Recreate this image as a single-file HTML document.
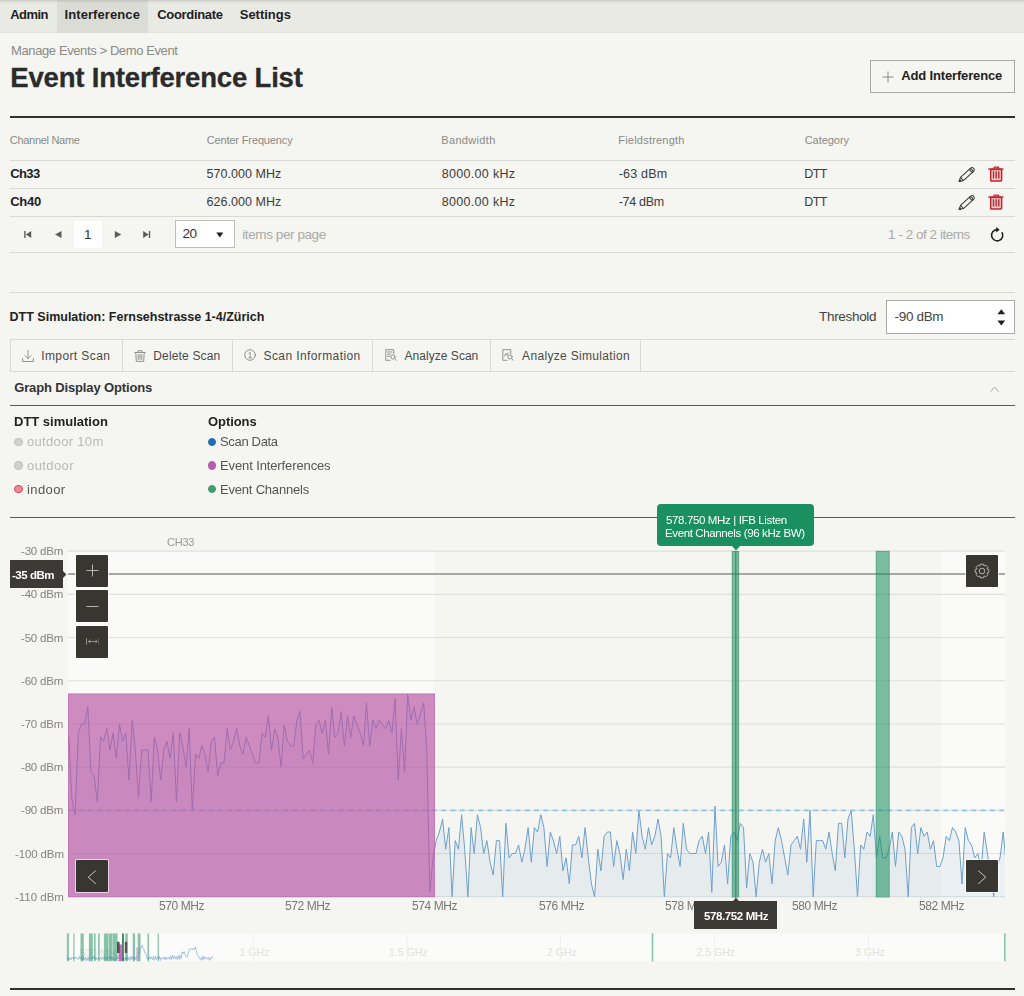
<!DOCTYPE html>
<html lang="en"><head><meta charset="utf-8"><title>Event Interference List</title>
<style>
*{box-sizing:border-box;margin:0;padding:0}
html,body{width:1024px;height:996px;overflow:hidden}
html{background:#f5f5f1}
body{position:relative;font-family:"Liberation Sans", sans-serif}
.abs{position:absolute}
.t{position:absolute;white-space:nowrap;line-height:0;font-family:"Liberation Sans", sans-serif}
.hl{position:absolute;height:1px;left:10px;width:1005px;background:#d9d9d5}
.btn{position:absolute;background:#383631;width:32.4px;height:32.4px;box-shadow:0 0 0 1px rgba(255,255,255,.62);border-radius:1px}
</style></head>
<body>
<div class="abs" style="left:0;top:0;width:1024px;height:32.6px;background:linear-gradient(#c9c9c4 0,#e2e2dd 2px,#eaeae5 4px,#eaeae5 30.6px,#e6e6e1 31.2px,#e6e6e1 100%)"></div>
<div class="abs" style="left:57px;top:0;width:91px;height:32.6px;background:linear-gradient(#c2c2bd 0,#d6d6d1 2px,#dcdcd6 4px,#dcdcd6 100%)"></div>
<div class="abs" style="left:870px;top:60px;width:145px;height:33px;border:1px solid #a9a9a5"></div>
<svg class="abs" style="left:882px;top:71px" width="12" height="12" viewBox="0 0 12 12"><path d="M6 0.5V11.5M0.5 6H11.5" stroke="#8a8a86" stroke-width="1" fill="none"/></svg>
<div class="abs" style="left:10px;top:115.6px;width:1005px;height:2.1px;background:#33322e"></div>
<div class="abs" style="left:10px;top:988px;width:1005px;height:2.3px;background:#33322e"></div>
<div class="hl" style="top:160px"></div>
<div class="hl" style="top:188px"></div>
<div class="hl" style="top:216px"></div>
<div class="hl" style="top:252px"></div>
<div class="hl" style="top:292px"></div>
<div class="hl" style="top:339px"></div>
<div class="hl" style="top:371px"></div>
<div class="hl" style="top:405px;background:#5a5a56"></div>
<div class="hl" style="top:517px;background:#5a5a56"></div>
<svg class="abs" style="left:955px;top:165.5px" width="22" height="19" viewBox="0 0 22 19"><g transform="translate(4.0,15.6) rotate(-42)" fill="none" stroke="#3a3a3a" stroke-width="1.05" stroke-linejoin="round"><path d="M0.2 0L4 -2.15H17.6A2.15 2.15 0 0 1 17.6 2.15H4Z"/><path d="M4 -2.15V2.15"/><ellipse cx="16.6" cy="0" rx="1" ry="2.15"/><path d="M0.2 0L1.8 -0.9V0.9Z" fill="#3a3a3a"/></g></svg>
<svg class="abs" style="left:988px;top:165.8px" width="16" height="16" viewBox="0 0 16 16"><g fill="none" stroke="#c0272d"><path d="M0.4 3h15" stroke-width="1.5"/><path d="M5.7 2.6L6.5 1.1H10.3L11.1 2.6" stroke-width="1.3" stroke-linejoin="round"/><rect x="2.7" y="3.4" width="10.9" height="11.7" rx="0.8" stroke-width="1.5" fill="rgba(192,39,45,0.18)"/><path d="M5.5 5.2v7.4M8.15 5.2v7.4M10.8 5.2v7.4" stroke-width="1.4"/></g></svg>
<svg class="abs" style="left:955px;top:193.5px" width="22" height="19" viewBox="0 0 22 19"><g transform="translate(4.0,15.6) rotate(-42)" fill="none" stroke="#3a3a3a" stroke-width="1.05" stroke-linejoin="round"><path d="M0.2 0L4 -2.15H17.6A2.15 2.15 0 0 1 17.6 2.15H4Z"/><path d="M4 -2.15V2.15"/><ellipse cx="16.6" cy="0" rx="1" ry="2.15"/><path d="M0.2 0L1.8 -0.9V0.9Z" fill="#3a3a3a"/></g></svg>
<svg class="abs" style="left:988px;top:193.8px" width="16" height="16" viewBox="0 0 16 16"><g fill="none" stroke="#c0272d"><path d="M0.4 3h15" stroke-width="1.5"/><path d="M5.7 2.6L6.5 1.1H10.3L11.1 2.6" stroke-width="1.3" stroke-linejoin="round"/><rect x="2.7" y="3.4" width="10.9" height="11.7" rx="0.8" stroke-width="1.5" fill="rgba(192,39,45,0.18)"/><path d="M5.5 5.2v7.4M8.15 5.2v7.4M10.8 5.2v7.4" stroke-width="1.4"/></g></svg>
<svg class="abs" style="left:989px;top:227px" width="16" height="16" viewBox="0 0 16 16"><path d="M12.9 5.2A5.6 5.6 0 1 1 8 2.6" fill="none" stroke="#222" stroke-width="1.6"/><path d="M7.2 0l3.4 2.7L7.2 5.4z" fill="#222"/></svg>
<div class="abs" style="left:74px;top:221px;width:28px;height:27px;background:#fff"></div>
<div class="abs" style="left:175px;top:220px;width:60px;height:28px;background:#fff;border:1px solid #bebeba"></div>
<svg class="abs" style="left:20px;top:229px" width="140" height="11" viewBox="0 0 140 11"><g fill="#5c5c58"><rect x="4.2" y="2" width="1.4" height="7"/><path d="M11.2 2v7L5.8 5.5z"/><path d="M41.5 2v7L35 5.5z"/><path d="M94.8 2v7l6.5-3.5z"/><path d="M123.2 2v7l5.4-3.5z"/><rect x="128.8" y="2" width="1.4" height="7"/></g></svg>
<svg class="abs" style="left:216px;top:232px" width="8" height="6" viewBox="0 0 8 6"><path d="M0.3 0.5h7L3.8 5.6z" fill="#222"/></svg>
<div class="abs" style="left:886px;top:300.4px;width:128.6px;height:33.4px;background:#fff;border:1px solid #a9a9a5"></div>
<svg class="abs" style="left:996.5px;top:309.4px" width="9" height="18" viewBox="0 0 9 18"><path d="M0.4 5.2h7.8L4.3 0.3zM0.4 11.6h7.8L4.3 16.6z" fill="#222"/></svg>
<div class="abs" style="left:10px;top:339px;width:1px;height:33px;background:#d9d9d5"></div>
<div class="abs" style="left:122px;top:339px;width:1px;height:33px;background:#d9d9d5"></div>
<div class="abs" style="left:232px;top:339px;width:1px;height:33px;background:#d9d9d5"></div>
<div class="abs" style="left:372px;top:339px;width:1px;height:33px;background:#d9d9d5"></div>
<div class="abs" style="left:490px;top:339px;width:1px;height:33px;background:#d9d9d5"></div>
<div class="abs" style="left:640px;top:339px;width:1px;height:33px;background:#d9d9d5"></div>
<svg class="abs" style="left:22px;top:349.6px" width="12" height="12" viewBox="0 0 12 12"><path d="M6 0.5v8M2.8 5.5L6 8.6l3.2-3.1M0.6 8.5v3h10.8v-3" stroke="#8c8c88" stroke-width="0.95" fill="none" stroke-linejoin="round" stroke-linecap="round"/></svg>
<svg class="abs" style="left:134.2px;top:349.6px" width="12" height="12" viewBox="0 0 12 12"><path d="M0.8 2.5h10.4M4 2.3V0.8h4v1.5M1.8 2.8l0.5 8.6h7.4l0.5-8.6M4.2 4.5v5M6 4.5v5M7.8 4.5v5" stroke="#8c8c88" stroke-width="0.95" fill="none" stroke-linejoin="round" stroke-linecap="round"/></svg>
<svg class="abs" style="left:244.2px;top:349.4px" width="12" height="12" viewBox="0 0 12 12"><circle cx="6" cy="6" r="5.3" stroke="#8c8c88" stroke-width="0.95" fill="none" stroke-linejoin="round" stroke-linecap="round"/><path d="M5 4.2L6.2 3.4v5.4M5 8.8h2.4" stroke="#8c8c88" stroke-width="0.95" fill="none" stroke-linejoin="round" stroke-linecap="round"/></svg>
<svg class="abs" style="left:384.6px;top:349.4px" width="12" height="12" viewBox="0 0 12 12"><path d="M5 11.3H0.8V0.7h8v4M2.6 3h4.4M2.6 5.2h3M2.6 7.4h2" stroke="#8c8c88" stroke-width="0.95" fill="none" stroke-linejoin="round" stroke-linecap="round"/><circle cx="8" cy="8" r="2.1" stroke="#8c8c88" stroke-width="0.95" fill="none" stroke-linejoin="round" stroke-linecap="round"/><path d="M9.6 9.6l1.8 1.8" stroke="#8c8c88" stroke-width="0.95" fill="none" stroke-linejoin="round" stroke-linecap="round"/></svg>
<svg class="abs" style="left:501.6px;top:349.4px" width="12" height="12" viewBox="0 0 12 12"><path d="M5 11.3H0.8V0.7h8v4M2.4 7.2l1.4-2.6 1.2 1.6 1.2-2.4" stroke="#8c8c88" stroke-width="0.95" fill="none" stroke-linejoin="round" stroke-linecap="round"/><circle cx="8" cy="8" r="2.1" stroke="#8c8c88" stroke-width="0.95" fill="none" stroke-linejoin="round" stroke-linecap="round"/><path d="M9.6 9.6l1.8 1.8" stroke="#8c8c88" stroke-width="0.95" fill="none" stroke-linejoin="round" stroke-linecap="round"/></svg>
<svg class="abs" style="left:989.5px;top:386px" width="10" height="7" viewBox="0 0 10 7"><path d="M0.6 5.6L4.6 1 8.6 5.6" stroke="#a2a29e" stroke-width="1" fill="none"/></svg>
<div class="abs" style="left:14.2px;top:437.6px;width:8.4px;height:8.4px;border-radius:50%;background:#d0d0cc;border:1px solid #bdbdb9"></div>
<div class="abs" style="left:14.2px;top:461.2px;width:8.4px;height:8.4px;border-radius:50%;background:#d0d0cc;border:1px solid #bdbdb9"></div>
<div class="abs" style="left:14.2px;top:485.1px;width:8.4px;height:8.4px;border-radius:50%;background:#ef8a94;border:1px solid #dc4a5e"></div>
<div class="abs" style="left:208px;top:437.6px;width:8.4px;height:8.4px;border-radius:50%;background:#1f6eb5;border:1px solid #1f6eb5"></div>
<div class="abs" style="left:208px;top:461.2px;width:8.4px;height:8.4px;border-radius:50%;background:#b95cb0;border:1px solid #b95cb0"></div>
<div class="abs" style="left:208px;top:485.1px;width:8.4px;height:8.4px;border-radius:50%;background:#3f9e72;border:1px solid #3f9e72"></div>
<svg class="abs" style="left:0;top:0" width="1024" height="996" viewBox="0 0 1024 996">
<rect x="68" y="551" width="366.6" height="346" fill="#fafaf8"/>
<rect x="941" y="551" width="64.5" height="346" fill="#fafaf8"/>
<line x1="68" x2="1005" y1="551.15" y2="551.15" stroke="#dfdfdb" stroke-width="1.1"/>
<line x1="68" x2="1005" y1="594.35" y2="594.35" stroke="#dfdfdb" stroke-width="1.1"/>
<line x1="68" x2="1005" y1="637.55" y2="637.55" stroke="#dfdfdb" stroke-width="1.1"/>
<line x1="68" x2="1005" y1="680.75" y2="680.75" stroke="#dfdfdb" stroke-width="1.1"/>
<line x1="68" x2="1005" y1="723.95" y2="723.95" stroke="#dfdfdb" stroke-width="1.1"/>
<line x1="68" x2="1005" y1="767.15" y2="767.15" stroke="#dfdfdb" stroke-width="1.1"/>
<line x1="68" x2="1005" y1="810.35" y2="810.35" stroke="#dfdfdb" stroke-width="1.1"/>
<line x1="68" x2="1005" y1="853.55" y2="853.55" stroke="#dfdfdb" stroke-width="1.1"/>
<line x1="68" x2="1005" y1="896.75" y2="896.75" stroke="#dfdfdb" stroke-width="1.1"/>
<clipPath id="cp"><rect x="68" y="550" width="937" height="347"/></clipPath><g clip-path="url(#cp)">
<polygon points="68.2,897 68.8,736.9 72.0,799.5 75.1,814.7 78.3,732.6 81.5,724.0 84.6,724.0 87.8,706.7 91.0,771.5 94.1,775.8 97.3,801.7 100.5,736.9 103.6,741.2 106.8,728.3 110.0,749.9 113.1,732.6 116.3,758.5 119.5,724.0 122.6,741.2 125.8,732.6 129.0,780.1 132.2,719.6 135.3,749.9 138.5,797.4 141.7,749.9 144.8,749.9 148.0,749.9 151.2,801.7 154.3,736.9 157.5,749.9 160.7,780.1 163.8,749.9 167.0,741.2 170.2,758.5 173.3,732.6 176.5,801.7 179.7,732.6 182.8,745.5 186.0,767.1 189.2,728.3 192.3,810.4 195.5,754.2 198.7,758.5 201.8,745.5 205.0,754.2 208.2,771.5 211.3,741.2 214.5,736.9 217.7,775.8 220.8,762.8 224.0,762.8 227.2,728.3 230.3,749.9 233.5,741.2 236.7,728.3 239.8,745.5 243.0,754.2 246.2,736.9 249.3,745.5 252.5,754.2 255.7,762.8 258.9,762.8 262.0,733.0 265.2,737.3 268.4,715.7 271.5,750.3 274.7,728.7 277.9,737.3 281.0,767.1 284.2,724.8 287.4,741.2 290.5,746.0 293.7,746.0 296.9,720.1 300.0,711.4 303.2,758.9 306.4,754.2 309.5,750.3 312.7,763.3 315.9,724.4 319.0,720.1 322.2,733.0 325.4,720.1 328.5,754.2 331.7,707.1 334.9,737.3 338.0,733.0 341.2,711.4 344.4,746.0 347.5,715.7 350.7,737.3 353.9,715.7 357.0,724.4 360.2,733.0 363.4,746.0 366.5,702.8 369.7,746.0 372.9,720.1 376.0,728.7 379.2,720.1 382.4,724.4 385.6,728.7 388.7,720.1 391.9,733.0 395.1,698.5 398.2,780.1 401.4,728.7 404.6,771.5 407.7,694.1 410.9,720.1 414.1,707.1 417.2,724.4 420.4,713.6 423.6,702.8 426.7,746.8 429.9,892.0 433.1,857.0 436.2,840.6 439.4,832.0 442.6,819.0 445.7,849.2 448.9,827.6 452.1,896.8 455.2,840.6 458.4,849.2 461.6,814.7 464.7,849.2 467.9,896.8 471.1,827.6 474.2,853.5 477.4,814.7 480.6,827.6 483.7,853.5 486.9,840.6 490.1,862.2 493.2,875.1 496.4,840.6 499.6,840.6 502.7,896.8 505.9,823.3 509.1,857.9 512.2,853.5 515.4,853.5 518.6,844.9 521.8,862.2 524.9,849.2 528.1,827.6 531.3,862.2 534.4,827.6 537.6,832.0 540.8,814.7 543.9,827.6 547.1,866.5 550.3,832.0 553.4,840.6 556.6,853.5 559.8,836.3 562.9,870.8 566.1,857.9 569.3,883.8 572.4,844.9 575.6,844.9 578.8,836.3 581.9,857.9 585.1,827.6 588.3,857.9 591.4,883.8 594.6,896.8 597.8,849.2 600.9,870.8 604.1,836.3 607.3,832.0 610.4,832.0 613.6,866.5 616.8,840.6 619.9,853.5 623.1,879.5 626.3,849.2 629.4,870.8 632.6,832.0 635.8,853.5 638.9,810.4 642.1,836.3 645.3,849.2 648.5,827.6 651.6,844.9 654.8,836.3 658.0,819.0 661.1,836.3 664.3,896.8 667.5,853.5 670.6,857.9 673.8,827.6 677.0,849.2 680.1,866.5 683.3,823.3 686.5,849.2 689.6,853.5 692.8,853.5 696.0,853.5 699.1,840.6 702.3,836.3 705.5,853.5 708.6,832.0 711.8,892.4 715.0,806.0 718.1,866.5 721.3,862.2 724.5,844.9 727.6,883.8 730.8,836.3 734.0,832.0 737.1,840.6 740.3,823.3 743.5,827.6 746.6,888.1 749.8,853.5 753.0,862.2 756.1,896.8 759.3,862.2 762.5,849.2 765.6,862.2 768.8,853.5 772.0,883.8 775.2,840.6 778.3,827.6 781.5,840.6 784.7,857.9 787.8,875.1 791.0,844.9 794.2,840.6 797.3,836.3 800.5,849.2 803.7,819.0 806.8,862.2 810.0,810.4 813.2,896.8 816.3,840.6 819.5,840.6 822.7,840.6 825.8,849.2 829.0,832.0 832.2,853.5 835.3,870.8 838.5,823.3 841.7,823.3 844.8,857.9 848.0,819.0 851.2,810.4 854.3,849.2 857.5,896.8 860.7,844.9 863.8,849.2 867.0,832.0 870.2,836.3 873.3,814.7 876.5,857.9 879.7,836.3 882.8,857.9 886.0,857.9 889.2,849.2 892.3,832.0 895.5,866.5 898.7,832.0 901.9,836.3 905.0,849.2 908.2,896.8 911.4,827.6 914.5,823.3 917.7,853.5 920.9,827.6 924.0,836.3 927.2,832.0 930.4,849.2 933.5,840.6 936.7,866.5 939.9,866.5 943.0,857.9 946.2,836.3 949.4,840.6 952.5,827.6 955.7,832.0 958.9,840.6 962.0,883.8 965.2,827.6 968.4,840.6 971.5,844.9 974.7,857.9 977.9,853.5 981.0,870.8 984.2,832.0 987.4,853.5 990.5,875.1 993.7,896.8 996.9,866.5 1000.0,857.9 1003.2,832.0 1006.4,866.5 1007,897" fill="rgba(110,160,205,0.11)"/>
<polyline points="68.8,736.9 72.0,799.5 75.1,814.7 78.3,732.6 81.5,724.0 84.6,724.0 87.8,706.7 91.0,771.5 94.1,775.8 97.3,801.7 100.5,736.9 103.6,741.2 106.8,728.3 110.0,749.9 113.1,732.6 116.3,758.5 119.5,724.0 122.6,741.2 125.8,732.6 129.0,780.1 132.2,719.6 135.3,749.9 138.5,797.4 141.7,749.9 144.8,749.9 148.0,749.9 151.2,801.7 154.3,736.9 157.5,749.9 160.7,780.1 163.8,749.9 167.0,741.2 170.2,758.5 173.3,732.6 176.5,801.7 179.7,732.6 182.8,745.5 186.0,767.1 189.2,728.3 192.3,810.4 195.5,754.2 198.7,758.5 201.8,745.5 205.0,754.2 208.2,771.5 211.3,741.2 214.5,736.9 217.7,775.8 220.8,762.8 224.0,762.8 227.2,728.3 230.3,749.9 233.5,741.2 236.7,728.3 239.8,745.5 243.0,754.2 246.2,736.9 249.3,745.5 252.5,754.2 255.7,762.8 258.9,762.8 262.0,733.0 265.2,737.3 268.4,715.7 271.5,750.3 274.7,728.7 277.9,737.3 281.0,767.1 284.2,724.8 287.4,741.2 290.5,746.0 293.7,746.0 296.9,720.1 300.0,711.4 303.2,758.9 306.4,754.2 309.5,750.3 312.7,763.3 315.9,724.4 319.0,720.1 322.2,733.0 325.4,720.1 328.5,754.2 331.7,707.1 334.9,737.3 338.0,733.0 341.2,711.4 344.4,746.0 347.5,715.7 350.7,737.3 353.9,715.7 357.0,724.4 360.2,733.0 363.4,746.0 366.5,702.8 369.7,746.0 372.9,720.1 376.0,728.7 379.2,720.1 382.4,724.4 385.6,728.7 388.7,720.1 391.9,733.0 395.1,698.5 398.2,780.1 401.4,728.7 404.6,771.5 407.7,694.1 410.9,720.1 414.1,707.1 417.2,724.4 420.4,713.6 423.6,702.8 426.7,746.8 429.9,892.0 433.1,857.0 436.2,840.6 439.4,832.0 442.6,819.0 445.7,849.2 448.9,827.6 452.1,896.8 455.2,840.6 458.4,849.2 461.6,814.7 464.7,849.2 467.9,896.8 471.1,827.6 474.2,853.5 477.4,814.7 480.6,827.6 483.7,853.5 486.9,840.6 490.1,862.2 493.2,875.1 496.4,840.6 499.6,840.6 502.7,896.8 505.9,823.3 509.1,857.9 512.2,853.5 515.4,853.5 518.6,844.9 521.8,862.2 524.9,849.2 528.1,827.6 531.3,862.2 534.4,827.6 537.6,832.0 540.8,814.7 543.9,827.6 547.1,866.5 550.3,832.0 553.4,840.6 556.6,853.5 559.8,836.3 562.9,870.8 566.1,857.9 569.3,883.8 572.4,844.9 575.6,844.9 578.8,836.3 581.9,857.9 585.1,827.6 588.3,857.9 591.4,883.8 594.6,896.8 597.8,849.2 600.9,870.8 604.1,836.3 607.3,832.0 610.4,832.0 613.6,866.5 616.8,840.6 619.9,853.5 623.1,879.5 626.3,849.2 629.4,870.8 632.6,832.0 635.8,853.5 638.9,810.4 642.1,836.3 645.3,849.2 648.5,827.6 651.6,844.9 654.8,836.3 658.0,819.0 661.1,836.3 664.3,896.8 667.5,853.5 670.6,857.9 673.8,827.6 677.0,849.2 680.1,866.5 683.3,823.3 686.5,849.2 689.6,853.5 692.8,853.5 696.0,853.5 699.1,840.6 702.3,836.3 705.5,853.5 708.6,832.0 711.8,892.4 715.0,806.0 718.1,866.5 721.3,862.2 724.5,844.9 727.6,883.8 730.8,836.3 734.0,832.0 737.1,840.6 740.3,823.3 743.5,827.6 746.6,888.1 749.8,853.5 753.0,862.2 756.1,896.8 759.3,862.2 762.5,849.2 765.6,862.2 768.8,853.5 772.0,883.8 775.2,840.6 778.3,827.6 781.5,840.6 784.7,857.9 787.8,875.1 791.0,844.9 794.2,840.6 797.3,836.3 800.5,849.2 803.7,819.0 806.8,862.2 810.0,810.4 813.2,896.8 816.3,840.6 819.5,840.6 822.7,840.6 825.8,849.2 829.0,832.0 832.2,853.5 835.3,870.8 838.5,823.3 841.7,823.3 844.8,857.9 848.0,819.0 851.2,810.4 854.3,849.2 857.5,896.8 860.7,844.9 863.8,849.2 867.0,832.0 870.2,836.3 873.3,814.7 876.5,857.9 879.7,836.3 882.8,857.9 886.0,857.9 889.2,849.2 892.3,832.0 895.5,866.5 898.7,832.0 901.9,836.3 905.0,849.2 908.2,896.8 911.4,827.6 914.5,823.3 917.7,853.5 920.9,827.6 924.0,836.3 927.2,832.0 930.4,849.2 933.5,840.6 936.7,866.5 939.9,866.5 943.0,857.9 946.2,836.3 949.4,840.6 952.5,827.6 955.7,832.0 958.9,840.6 962.0,883.8 965.2,827.6 968.4,840.6 971.5,844.9 974.7,857.9 977.9,853.5 981.0,870.8 984.2,832.0 987.4,853.5 990.5,875.1 993.7,896.8 996.9,866.5 1000.0,857.9 1003.2,832.0 1006.4,866.5" fill="none" stroke="#6fa0cb" stroke-width="1" stroke-linejoin="round"/>
</g>
<line x1="68" x2="1005.5" y1="810.4" y2="810.4" stroke="#8cc6f0" stroke-width="1.9" stroke-dasharray="4.8 4.5" stroke-dashoffset="8.1"/>
<rect x="68" y="693.5" width="367" height="203.5" fill="rgba(183,82,163,0.66)"/>
<rect x="68.5" y="694" width="366" height="203" fill="none" stroke="rgba(184,84,168,0.32)" stroke-width="1"/>
<line x1="68" x2="1005" y1="574" y2="574" stroke="#a8a8a4" stroke-width="1.9"/>
<rect x="731.8" y="550.9" width="7.3" height="346.1" fill="rgba(26,144,96,0.57)"/><rect x="732.3" y="551.4" width="6.3" height="346" fill="none" stroke="rgba(26,144,96,0.33)" stroke-width="1"/>
<rect x="875.8" y="550.9" width="13.85" height="346.1" fill="rgba(26,144,96,0.57)"/><rect x="876.3" y="551.4" width="12.85" height="346" fill="none" stroke="rgba(26,144,96,0.33)" stroke-width="1"/>
<line x1="735.8" x2="735.8" y1="551" y2="899" stroke="#5a6b60" stroke-width="1.2" opacity="0.8"/>
</svg>
<div class="abs" style="left:67px;top:933.5px;width:939px;height:27.7px;background:#fbfbf9;z-index:-2"></div>
<svg class="abs" style="left:0;top:0" width="1024" height="996" viewBox="0 0 1024 996">
<line x1="253" x2="253" y1="933.5" y2="961.2" stroke="#f0f0ec" stroke-width="1"/>
<line x1="407" x2="407" y1="933.5" y2="961.2" stroke="#f0f0ec" stroke-width="1"/>
<line x1="560.5" x2="560.5" y1="933.5" y2="961.2" stroke="#f0f0ec" stroke-width="1"/>
<line x1="714.5" x2="714.5" y1="933.5" y2="961.2" stroke="#f0f0ec" stroke-width="1"/>
<line x1="868.5" x2="868.5" y1="933.5" y2="961.2" stroke="#f0f0ec" stroke-width="1"/>
<polyline points="67.2,959.3 68.2,957.6 69.1,960.0 70.1,957.8 71.0,959.8 72.0,957.2 72.9,958.8 73.9,956.9 74.8,958.8 75.8,957.0 76.7,958.8 77.7,957.7 78.6,959.5 79.6,956.2 80.5,958.9 81.5,957.5 82.4,960.0 83.4,956.0 84.3,959.9 85.3,957.1 86.2,960.7 87.2,957.8 88.1,960.4 89.1,957.3 90.0,959.0 91.0,957.7 91.9,959.3 92.9,956.3 93.8,959.1 94.8,956.7 95.7,960.0 96.7,957.2 97.6,959.8 98.6,957.8 99.5,958.8 100.5,957.5 101.4,960.1 102.4,957.0 103.3,959.3 104.3,956.7 105.2,959.6 106.2,957.3 107.1,960.3 108.1,956.5 109.0,959.2 110.0,956.8 110.9,959.8 111.9,956.1 112.8,960.2 113.8,957.3 114.7,960.7 115.7,957.7 116.6,959.5 117.6,956.4 118.5,959.0 119.5,956.9 120.4,958.8 121.4,956.6 122.3,960.2 123.3,956.8 124.2,960.5 125.2,957.3 126.1,960.1 127.1,956.7 128.0,959.9 129.0,957.0 129.9,960.4 130.9,956.0 131.8,959.6 132.8,956.6 133.7,958.8 134.7,956.5 135.6,960.0 136.6,955.9 137.5,960.3 138.5,952.7 139.4,952.7 140.4,947.6 141.3,947.6 142.2,944.9 143.2,948.9 144.1,949.9 145.1,953.5 146.0,953.4 147.0,958.4 147.9,957.4 148.9,959.5 149.8,956.2 150.8,958.9 151.7,957.0 152.7,959.8 153.6,956.1 154.6,960.3 155.5,956.2 156.5,959.3 157.4,957.1 158.4,959.4 159.3,956.1 160.3,960.6 161.2,957.6 162.2,959.1 163.1,957.4 164.1,959.2 165.0,956.9 166.0,959.9 166.9,957.4 167.9,958.7 168.8,957.1 169.8,959.4 170.7,955.8 171.7,959.6 172.6,955.5 173.6,958.7 174.5,955.7 175.5,959.1 176.4,956.8 177.4,959.5 178.3,955.3 179.3,959.4 180.2,955.3 181.2,958.5 182.1,952.0 183.1,953.8 184.0,951.5 185.0,953.7 185.9,956.2 186.9,957.5 187.8,956.0 188.8,950.3 189.7,948.7 190.7,949.6 191.6,948.5 192.6,949.8 193.5,948.1 194.5,949.7 195.4,947.1 196.4,950.8 197.3,955.0 198.3,956.6 199.2,957.2 200.2,959.4 201.1,957.7 202.1,960.4 203.0,955.9 204.0,959.6 204.9,956.9 205.9,958.9 206.8,957.7 207.8,959.4 208.7,957.4 209.7,960.4 210.6,957.6 211.6,958.7 212.5,956.0" fill="none" stroke="#8fb3d9" stroke-width="0.75"/>
<rect x="66.90" y="933.5" width="2.00" height="27.7" fill="rgba(26,144,96,0.52)"/>
<rect x="73.30" y="933.5" width="1.20" height="27.7" fill="rgba(26,144,96,0.52)"/>
<rect x="80.50" y="933.5" width="3.25" height="27.7" fill="rgba(26,144,96,0.52)"/>
<rect x="88.90" y="933.5" width="3.90" height="27.7" fill="rgba(26,144,96,0.52)"/>
<rect x="94.00" y="933.5" width="1.60" height="27.7" fill="rgba(26,144,96,0.52)"/>
<rect x="98.10" y="933.5" width="1.60" height="27.7" fill="rgba(26,144,96,0.52)"/>
<rect x="103.90" y="933.5" width="4.30" height="27.7" fill="rgba(26,144,96,0.52)"/>
<rect x="108.60" y="933.5" width="4.00" height="27.7" fill="rgba(26,144,96,0.52)"/>
<rect x="113.00" y="933.5" width="4.50" height="27.7" fill="rgba(26,144,96,0.52)"/>
<rect x="125.30" y="933.5" width="2.50" height="27.7" fill="rgba(26,144,96,0.52)"/>
<rect x="132.70" y="933.5" width="2.30" height="27.7" fill="rgba(26,144,96,0.52)"/>
<rect x="137.70" y="933.5" width="2.80" height="27.7" fill="rgba(26,144,96,0.52)"/>
<rect x="147.50" y="933.5" width="1.50" height="27.7" fill="rgba(26,144,96,0.52)"/>
<rect x="157.70" y="933.5" width="1.20" height="27.7" fill="rgba(26,144,96,0.52)"/>
<rect x="651.70" y="933.5" width="1.60" height="27.7" fill="rgba(26,144,96,0.52)"/>
<rect x="1004.00" y="933.5" width="1.60" height="27.7" fill="rgba(26,144,96,0.52)"/>
<rect x="122.2" y="933.5" width="1.55" height="27.7" fill="#0f7048"/>
<rect x="118.6" y="944.5" width="3.6" height="16.7" fill="rgba(196,84,182,0.85)"/>
<rect x="136.25" y="947.5" width="1.9" height="13.7" fill="rgba(225,150,218,0.8)"/>
<rect x="117" y="941.8" width="2.6" height="11.2" fill="rgba(60,60,56,0.85)"/>
<rect x="124.8" y="941.8" width="2.4" height="11.2" fill="rgba(60,60,56,0.8)"/>
</svg>
<div class="btn" style="left:76px;top:554.5px"></div><div class="btn" style="left:76px;top:590px"></div><div class="btn" style="left:76px;top:625.5px"></div>
<svg class="abs" style="left:85.5px;top:564.2px" width="13" height="13" viewBox="0 0 13 13"><path d="M6.5 0.5v12M0.5 6.5h12" stroke="#b4b4b0" stroke-width="1" fill="none"/></svg>
<svg class="abs" style="left:85.5px;top:599.7px" width="13" height="13" viewBox="0 0 13 13"><path d="M0.5 6.5h12" stroke="#b4b4b0" stroke-width="1" fill="none"/></svg>
<svg class="abs" style="left:85.7px;top:638.2px" width="13.6" height="7" viewBox="0 0 13.6 7"><path d="M0.5 0.2v6.6M13.1 0.2v6.6M2.4 3.5h8.8M4.2 1.9L2.4 3.5l1.8 1.6M9.4 1.9l1.8 1.6-1.8 1.6" stroke="#9c9c98" stroke-width="0.9" fill="none"/></svg>
<div class="btn" style="left:965.8px;top:554.5px"></div>
<svg class="abs" style="left:973.95px;top:562.5px" width="16" height="16" viewBox="0 0 16 16"><path d="M6.50 1.16 L9.50 1.16 L10.07 3.01 L11.77 2.10 L13.90 4.23 L12.99 5.93 L14.84 6.50 L14.84 9.50 L12.99 10.07 L13.90 11.77 L11.77 13.90 L10.07 12.99 L9.50 14.84 L6.50 14.84 L5.93 12.99 L4.23 13.90 L2.10 11.77 L3.01 10.07 L1.16 9.50 L1.16 6.50 L3.01 5.93 L2.10 4.23 L4.23 2.10 L5.93 3.01 Z" stroke="#bdbdb9" stroke-width="0.9" fill="none" stroke-linejoin="round"/><circle cx="8" cy="8" r="2.8" stroke="#bdbdb9" stroke-width="0.9" fill="none"/></svg>
<div class="btn" style="left:76px;top:859.8px"></div>
<div class="btn" style="left:965.8px;top:859.8px"></div>
<svg class="abs" style="left:86.9px;top:869.9px" width="10" height="15" viewBox="0 0 10 15"><path d="M8.8 0.6L1.2 7.2 8.8 13.8" stroke="#c8c8c4" stroke-width="1" fill="none"/></svg>
<svg class="abs" style="left:976.8px;top:869.7px" width="10" height="15" viewBox="0 0 10 15"><path d="M1.2 0.6L8.8 7.2 1.2 13.8" stroke="#c8c8c4" stroke-width="1" fill="none"/></svg>
<div class="abs" style="left:10px;top:560.2px;width:53.2px;height:27.6px;background:#3b3a36"></div>
<svg class="abs" style="left:63px;top:570.5px" width="4" height="7" viewBox="0 0 4 7"><path d="M0 0l3.4 3.5L0 7z" fill="#3b3a36"/></svg>
<div class="abs" style="left:656.8px;top:504.2px;width:156.8px;height:42px;background:#1a9060;border-radius:4px"></div>
<svg class="abs" style="left:731.5px;top:546px" width="8" height="5" viewBox="0 0 8 5"><path d="M0 0h8L4 4.6z" fill="#1a9060"/></svg>
<div class="abs" style="left:694.3px;top:901.4px;width:82.5px;height:28.1px;background:#3b3a36;z-index:5"></div>
<svg class="abs" style="left:731.5px;top:897.5px" width="8" height="4" viewBox="0 0 8 4"><path d="M0 4h8L4 0z" fill="#3b3a36"/></svg>
<span class="t" id="t0" style="left:10.23px;top:14.80px;font-size:13px;font-weight:700;color:#222;letter-spacing:-0.537px;">Admin</span>
<span class="t" id="t1" style="left:64.53px;top:14.80px;font-size:13px;font-weight:700;color:#222;letter-spacing:0.086px;">Interference</span>
<span class="t" id="t2" style="left:157.18px;top:14.80px;font-size:13px;font-weight:700;color:#222;letter-spacing:-0.306px;">Coordinate</span>
<span class="t" id="t3" style="left:239.72px;top:14.80px;font-size:13px;font-weight:700;color:#222;letter-spacing:-0.012px;">Settings</span>
<span class="t" id="t4" style="left:11.09px;top:50.80px;font-size:13px;font-weight:400;color:#8a8a86;letter-spacing:-0.397px;">Manage Events &gt; Demo Event</span>
<span class="t" id="t5" style="left:10.29px;top:77.80px;font-size:27.5px;font-weight:700;color:#2b2b2b;letter-spacing:-0.177px;-webkit-text-stroke:0.3px #2b2b2b;">Event Interference List</span>
<span class="t" id="t6" style="left:901.23px;top:75.80px;font-size:13px;font-weight:700;color:#222;letter-spacing:-0.150px;">Add Interference</span>
<span class="t" id="t7" style="left:9.81px;top:140.30px;font-size:11px;font-weight:400;color:#8a8a86;letter-spacing:-0.301px;">Channel Name</span>
<span class="t" id="t8" style="left:206.65px;top:140.30px;font-size:11px;font-weight:400;color:#8a8a86;letter-spacing:-0.133px;">Center Frequency</span>
<span class="t" id="t9" style="left:441.29px;top:140.30px;font-size:11px;font-weight:400;color:#8a8a86;letter-spacing:0.328px;">Bandwidth</span>
<span class="t" id="t10" style="left:618.29px;top:140.30px;font-size:11px;font-weight:400;color:#8a8a86;letter-spacing:0.211px;">Fieldstrength</span>
<span class="t" id="t11" style="left:804.65px;top:140.30px;font-size:11px;font-weight:400;color:#8a8a86;letter-spacing:-0.037px;">Category</span>
<span class="t" id="t12" style="left:10.18px;top:173.80px;font-size:13px;font-weight:700;color:#222;letter-spacing:-0.616px;">Ch33</span>
<span class="t" id="t13" style="left:206.48px;top:174.30px;font-size:12.5px;font-weight:400;color:#3c3c3c;letter-spacing:0.044px;">570.000 MHz</span>
<span class="t" id="t14" style="left:441.63px;top:174.30px;font-size:12.5px;font-weight:400;color:#3c3c3c;letter-spacing:0.331px;">8000.00 kHz</span>
<span class="t" id="t15" style="left:618.65px;top:174.30px;font-size:12.5px;font-weight:400;color:#3c3c3c;letter-spacing:0.224px;">-63 dBm</span>
<span class="t" id="t16" style="left:804.21px;top:174.30px;font-size:12.5px;font-weight:400;color:#3c3c3c;letter-spacing:-0.530px;">DTT</span>
<span class="t" id="t17" style="left:10.18px;top:201.80px;font-size:13px;font-weight:700;color:#222;letter-spacing:-0.267px;">Ch40</span>
<span class="t" id="t18" style="left:206.53px;top:202.30px;font-size:12.5px;font-weight:400;color:#3c3c3c;letter-spacing:0.039px;">626.000 MHz</span>
<span class="t" id="t19" style="left:441.63px;top:202.30px;font-size:12.5px;font-weight:400;color:#3c3c3c;letter-spacing:0.331px;">8000.00 kHz</span>
<span class="t" id="t20" style="left:618.65px;top:202.30px;font-size:12.5px;font-weight:400;color:#3c3c3c;letter-spacing:-0.276px;">-74 dBm</span>
<span class="t" id="t21" style="left:804.21px;top:202.30px;font-size:12.5px;font-weight:400;color:#3c3c3c;letter-spacing:-0.530px;">DTT</span>
<span class="t" id="t22" style="left:84.10px;top:234.80px;font-size:13.5px;font-weight:400;color:#333;letter-spacing:-3.700px;">1</span>
<span class="t" id="t23" style="left:182.49px;top:233.80px;font-size:13.5px;font-weight:400;color:#333;letter-spacing:-0.518px;">20</span>
<span class="t" id="t24" style="left:242.29px;top:234.80px;font-size:13.5px;font-weight:400;color:#aaaaa6;letter-spacing:-0.414px;">items per page</span>
<span class="t" id="t25" style="left:888.10px;top:234.80px;font-size:13.5px;font-weight:400;color:#aaaaa6;letter-spacing:-0.472px;">1 - 2 of 2 items</span>
<span class="t" id="t26" style="left:9.58px;top:317.30px;font-size:12.5px;font-weight:700;color:#222;letter-spacing:-0.004px;">DTT Simulation: Fernsehstrasse 1-4/Zürich</span>
<span class="t" id="t27" style="left:819.09px;top:316.80px;font-size:13.5px;font-weight:400;color:#444;letter-spacing:-0.321px;">Threshold</span>
<span class="t" id="t28" style="left:894.58px;top:316.80px;font-size:13.5px;font-weight:400;color:#444;letter-spacing:-0.342px;">-90 dBm</span>
<span class="t" id="t29" style="left:41.15px;top:356.30px;font-size:12px;font-weight:400;color:#4a4a4a;letter-spacing:0.412px;">Import Scan</span>
<span class="t" id="t30" style="left:153.26px;top:356.30px;font-size:12px;font-weight:400;color:#4a4a4a;letter-spacing:0.165px;">Delete Scan</span>
<span class="t" id="t31" style="left:263.58px;top:356.30px;font-size:12px;font-weight:400;color:#4a4a4a;letter-spacing:0.393px;">Scan Information</span>
<span class="t" id="t32" style="left:404.58px;top:356.30px;font-size:12px;font-weight:400;color:#4a4a4a;letter-spacing:0.030px;">Analyze Scan</span>
<span class="t" id="t33" style="left:522.12px;top:356.30px;font-size:12px;font-weight:400;color:#4a4a4a;letter-spacing:0.323px;">Analyze Simulation</span>
<span class="t" id="t34" style="left:14.18px;top:387.80px;font-size:13px;font-weight:700;color:#333;letter-spacing:-0.138px;">Graph Display Options</span>
<span class="t" id="t35" style="left:14.00px;top:421.80px;font-size:13px;font-weight:700;color:#222;letter-spacing:-0.005px;will-change:transform;">DTT simulation</span>
<span class="t" id="t36" style="left:208.00px;top:421.80px;font-size:13px;font-weight:700;color:#222;letter-spacing:-0.078px;will-change:transform;">Options</span>
<span class="t" id="t37" style="left:27.00px;top:441.80px;font-size:13px;font-weight:400;color:#b9b9b5;letter-spacing:0.324px;will-change:transform;">outdoor 10m</span>
<span class="t" id="t38" style="left:27.00px;top:465.80px;font-size:13px;font-weight:400;color:#b9b9b5;letter-spacing:0.414px;will-change:transform;">outdoor</span>
<span class="t" id="t39" style="left:27.00px;top:489.80px;font-size:13px;font-weight:400;color:#555;letter-spacing:0.413px;will-change:transform;">indoor</span>
<span class="t" id="t40" style="left:220.00px;top:441.80px;font-size:13px;font-weight:400;color:#555;letter-spacing:-0.325px;will-change:transform;">Scan Data</span>
<span class="t" id="t41" style="left:220.00px;top:465.80px;font-size:13px;font-weight:400;color:#555;letter-spacing:-0.117px;will-change:transform;">Event Interferences</span>
<span class="t" id="t42" style="left:220.00px;top:489.80px;font-size:13px;font-weight:400;color:#555;letter-spacing:-0.200px;will-change:transform;">Event Channels</span>
<span class="t" id="t43" style="left:21.00px;top:551.30px;font-size:11.5px;font-weight:400;color:#85837d;letter-spacing:-0.204px;will-change:transform;">-30 dBm</span>
<span class="t" id="t44" style="left:21.00px;top:594.30px;font-size:11.5px;font-weight:400;color:#85837d;letter-spacing:-0.204px;will-change:transform;">-40 dBm</span>
<span class="t" id="t45" style="left:21.00px;top:638.30px;font-size:11.5px;font-weight:400;color:#85837d;letter-spacing:-0.204px;will-change:transform;">-50 dBm</span>
<span class="t" id="t46" style="left:21.00px;top:681.30px;font-size:11.5px;font-weight:400;color:#85837d;letter-spacing:-0.204px;will-change:transform;">-60 dBm</span>
<span class="t" id="t47" style="left:21.00px;top:724.30px;font-size:11.5px;font-weight:400;color:#85837d;letter-spacing:-0.204px;will-change:transform;">-70 dBm</span>
<span class="t" id="t48" style="left:21.00px;top:767.30px;font-size:11.5px;font-weight:400;color:#85837d;letter-spacing:-0.204px;will-change:transform;">-80 dBm</span>
<span class="t" id="t49" style="left:21.00px;top:810.30px;font-size:11.5px;font-weight:400;color:#85837d;letter-spacing:-0.204px;will-change:transform;">-90 dBm</span>
<span class="t" id="t50" style="left:15.00px;top:854.30px;font-size:11.5px;font-weight:400;color:#85837d;letter-spacing:-0.126px;will-change:transform;">-100 dBm</span>
<span class="t" id="t51" style="left:15.00px;top:897.30px;font-size:11.5px;font-weight:400;color:#85837d;letter-spacing:-0.018px;will-change:transform;">-110 dBm</span>
<span class="t" id="t52" style="left:159.00px;top:906.30px;font-size:12px;font-weight:400;color:#777;letter-spacing:-0.429px;will-change:transform;">570 MHz</span>
<span class="t" id="t53" style="left:285.00px;top:906.30px;font-size:12px;font-weight:400;color:#777;letter-spacing:-0.429px;will-change:transform;">572 MHz</span>
<span class="t" id="t54" style="left:412.00px;top:906.30px;font-size:12px;font-weight:400;color:#777;letter-spacing:-0.429px;will-change:transform;">574 MHz</span>
<span class="t" id="t55" style="left:539.00px;top:906.30px;font-size:12px;font-weight:400;color:#777;letter-spacing:-0.429px;will-change:transform;">576 MHz</span>
<span class="t" id="t56" style="left:665.00px;top:906.30px;font-size:12px;font-weight:400;color:#777;letter-spacing:-0.429px;will-change:transform;">578 MHz</span>
<span class="t" id="t57" style="left:792.00px;top:906.30px;font-size:12px;font-weight:400;color:#777;letter-spacing:-0.429px;will-change:transform;">580 MHz</span>
<span class="t" id="t58" style="left:919.00px;top:906.30px;font-size:12px;font-weight:400;color:#777;letter-spacing:-0.429px;will-change:transform;">582 MHz</span>
<span class="t" id="t59" style="left:167.00px;top:542.30px;font-size:11px;font-weight:400;color:#999;letter-spacing:-0.218px;will-change:transform;">CH33</span>
<span class="t" id="t60" style="left:12.00px;top:575.30px;font-size:11.5px;font-weight:700;color:#fff;letter-spacing:-0.477px;will-change:transform;">-35 dBm</span>
<span class="t" id="t61" style="left:666.00px;top:520.30px;font-size:11.5px;font-weight:400;color:#fff;letter-spacing:-0.366px;will-change:transform;">578.750 MHz | IFB Listen</span>
<span class="t" id="t62" style="left:665.00px;top:533.30px;font-size:11.5px;font-weight:400;color:#fff;letter-spacing:-0.376px;will-change:transform;">Event Channels (96 kHz BW)</span>
<span class="t" id="t63" style="left:704.00px;top:916.30px;font-size:11.5px;font-weight:700;color:#fff;letter-spacing:-0.390px;z-index:6;will-change:transform;">578.752 MHz</span>
<span class="t" id="t64" style="left:79.50px;top:953.30px;font-size:10.5px;font-weight:400;color:#e2e2de;letter-spacing:0.000px;z-index:-1;">500 MHz</span>
<span class="t" id="t65" style="left:239.50px;top:952.30px;font-size:10.5px;font-weight:400;color:#e2e2de;letter-spacing:0.000px;z-index:-1;">1 GHz</span>
<span class="t" id="t66" style="left:389.00px;top:952.30px;font-size:10.5px;font-weight:400;color:#e2e2de;letter-spacing:0.000px;z-index:-1;">1.5 GHz</span>
<span class="t" id="t67" style="left:547.00px;top:952.30px;font-size:10.5px;font-weight:400;color:#e2e2de;letter-spacing:0.000px;z-index:-1;">2 GHz</span>
<span class="t" id="t68" style="left:696.50px;top:952.30px;font-size:10.5px;font-weight:400;color:#e2e2de;letter-spacing:0.000px;z-index:-1;">2.5 GHz</span>
<span class="t" id="t69" style="left:855.00px;top:952.30px;font-size:10.5px;font-weight:400;color:#e2e2de;letter-spacing:0.000px;z-index:-1;">3 GHz</span>
</body></html>
